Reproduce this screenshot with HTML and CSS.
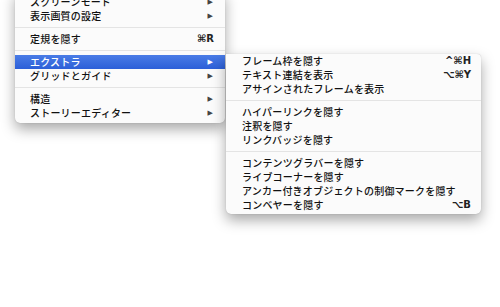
FILE: index.html
```html
<!DOCTYPE html>
<html lang="ja">
<head>
    <meta charset="UTF-8">
    <title>表示メニュー</title>
    <link rel="stylesheet" href="styles.css">
</head>
<body>
    <div class="screen">
        <!-- 表示メニュー -->
        <div class="menu main-menu">
            <div class="item"><span>スクリーンモード</span><span class="arrow">▶</span></div>
            <div class="item"><span>表示画質の設定</span><span class="arrow">▶</span></div>
            <div class="sep"></div>
            <div class="item"><span>定規を隠す</span><span class="key">⌘R</span></div>
            <div class="sep"></div>
            <div class="item active"><span>エクストラ</span><span class="arrow">▶</span></div>
            <div class="item"><span>グリッドとガイド</span><span class="arrow">▶</span></div>
            <div class="sep"></div>
            <div class="item"><span>構造</span><span class="arrow">▶</span></div>
            <div class="item"><span>ストーリーエディター</span><span class="arrow">▶</span></div>
        </div>

        <!-- エクストラ サブメニュー -->
        <div class="menu sub-menu">
            <div class="item"><span>フレーム枠を隠す</span><span class="key">^⌘H</span></div>
            <div class="item"><span>テキスト連結を表示</span><span class="key">⌥⌘Y</span></div>
            <div class="item"><span>アサインされたフレームを表示</span></div>
            <div class="sep"></div>
            <div class="item"><span>ハイパーリンクを隠す</span></div>
            <div class="item"><span>注釈を隠す</span></div>
            <div class="item"><span>リンクバッジを隠す</span></div>
            <div class="sep"></div>
            <div class="item"><span>コンテンツグラバーを隠す</span></div>
            <div class="item"><span>ライブコーナーを隠す</span></div>
            <div class="item"><span>アンカー付きオブジェクトの制御マークを隠す</span></div>
            <div class="item"><span>コンベヤーを隠す</span><span class="key">⌥B</span></div>
        </div>
    </div>
</body>
</html>
```

FILE: styles.css
```css
body {
    margin: 0;
    padding: 0;
    background-color: #fff;
    font-family: 'Noto Sans CJK JP', 'DejaVu Sans', sans-serif;
    color: #111;
}
.screen {
    display: flex;
    align-items: flex-start;
    height: 307px;
    overflow: hidden;
}
.menu {
    background-color: #fbfbfb;
    border-radius: 0 0 5px 5px;
    box-shadow: 0 6px 14px rgba(0, 0, 0, 0.35), 0 0 1px rgba(0, 0, 0, 0.25);
    font-size: 10px;
    font-weight: 500;
    letter-spacing: 0.2px;
}
.main-menu {
    width: 210px;
    margin-left: 15px;
    margin-top: -9px;
    padding: 4px 0 3px;
}
.sub-menu {
    width: 255px;
    margin-left: 1px;
    margin-top: 54px;
    padding: 0 0 2px;
    border-radius: 0 4px 5px 5px;
}
.item {
    display: flex;
    justify-content: space-between;
    align-items: center;
    height: 14px;
    line-height: 14px;
    padding: 0 11px 0 15px;
    white-space: nowrap;
}
.sub-menu .item {
    padding: 0 10px 0 16px;
}
.item.active {
    background: linear-gradient(#4a7ce6, #2c5fd8);
    color: #fff;
}
.arrow {
    font-family: 'DejaVu Sans', sans-serif;
    font-size: 7px;
    color: #444;
    padding-right: 1px;
}
.active .arrow {
    color: #fff;
}
.key {
    font-family: 'DejaVu Sans', sans-serif;
    font-size: 10px;
    font-weight: bold;
    color: #222;
    letter-spacing: 0;
}
.sep {
    height: 9px;
    display: flex;
    align-items: center;
}
.sep::after {
    content: "";
    flex: 1;
    height: 1px;
    background-color: #e4e4e4;
}
```
